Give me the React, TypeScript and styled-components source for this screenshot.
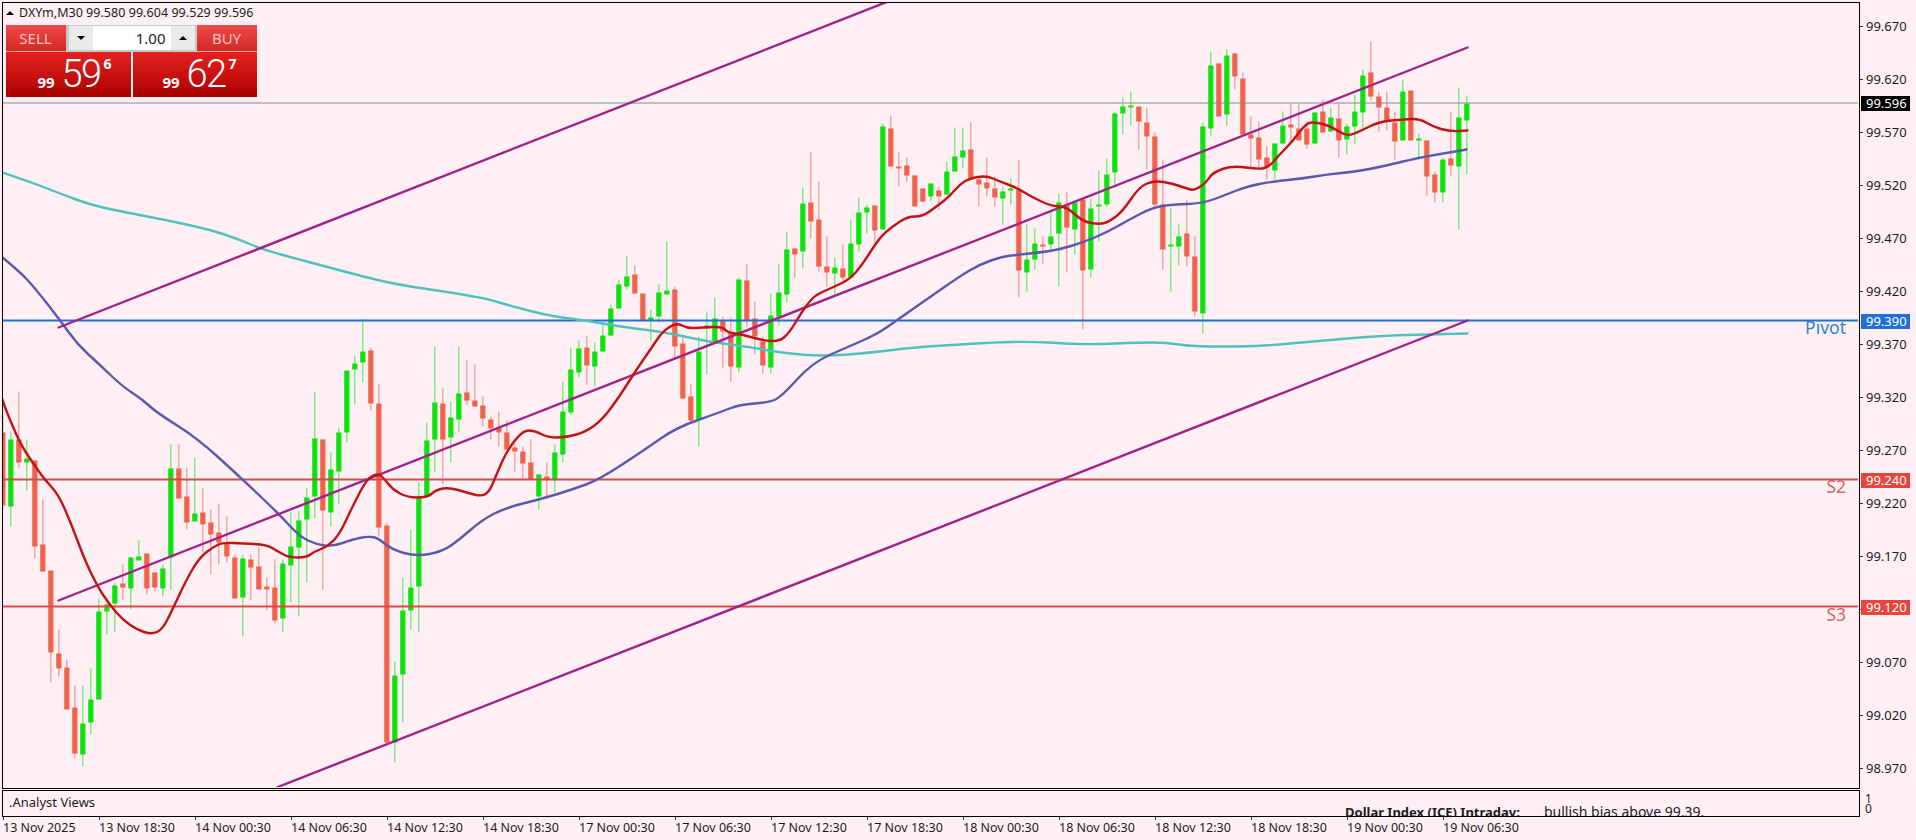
import React from 'react';
import styled, { createGlobalStyle } from 'styled-components';

type Candle = [number, number, number, number, number];

// high, body top, body bottom, low (all in px), 1 = bull
const CANDLES: Candle[] = [
  [405, 433, 506, 510, 0], [432, 440, 507, 527, 1], [392, 440, 463, 468, 0], [440, 459, 463, 491, 1],
  [461, 461, 547, 559, 0], [500, 545, 572, 572, 0], [571, 571, 653, 683, 0], [630, 654, 669, 677, 0],
  [660, 668, 710, 710, 0], [686, 708, 754, 759, 0], [686, 724, 755, 767, 1], [669, 700, 723, 735, 1],
  [599, 612, 700, 700, 1], [600, 605, 612, 635, 1], [583, 586, 604, 632, 1], [565, 584, 588, 600, 0],
  [557, 558, 589, 610, 1], [541, 557, 561, 561, 1], [554, 554, 589, 595, 0], [573, 573, 588, 592, 0],
  [565, 569, 589, 597, 1], [445, 469, 558, 590, 1], [445, 469, 499, 499, 0], [468, 497, 523, 530, 0],
  [458, 514, 522, 522, 1], [488, 513, 525, 553, 0], [510, 523, 535, 575, 0], [504, 533, 543, 565, 0],
  [517, 544, 557, 563, 0], [555, 558, 599, 599, 0], [555, 559, 598, 637, 1], [555, 560, 568, 600, 0],
  [548, 567, 590, 590, 0], [578, 587, 590, 611, 0], [560, 588, 621, 624, 0], [560, 564, 619, 632, 1],
  [513, 547, 566, 603, 1], [511, 521, 548, 617, 1], [489, 498, 520, 583, 1], [393, 439, 497, 519, 1],
  [440, 440, 511, 590, 0], [453, 470, 513, 527, 1], [428, 433, 472, 504, 1], [371, 371, 433, 443, 1],
  [356, 364, 370, 405, 1], [320, 352, 363, 383, 1], [348, 351, 404, 411, 0], [384, 404, 528, 537, 0],
  [523, 526, 743, 743, 0], [662, 676, 743, 763, 1], [578, 611, 675, 723, 1], [530, 588, 611, 630, 1],
  [483, 497, 587, 632, 1], [423, 441, 497, 497, 1], [347, 403, 440, 472, 1], [389, 404, 440, 485, 0],
  [402, 418, 438, 463, 1], [347, 394, 420, 433, 1], [361, 393, 401, 405, 0], [365, 401, 407, 407, 0],
  [397, 406, 419, 427, 0], [417, 420, 429, 440, 0], [412, 428, 433, 447, 0], [421, 433, 450, 452, 0],
  [445, 448, 452, 472, 0], [447, 452, 464, 480, 0], [440, 463, 480, 480, 0], [475, 475, 497, 510, 1],
  [463, 477, 480, 497, 0], [445, 453, 480, 493, 1], [382, 412, 455, 463, 1], [348, 370, 413, 415, 1],
  [341, 349, 373, 378, 1], [337, 348, 366, 385, 0], [343, 352, 367, 387, 1], [323, 336, 352, 352, 1],
  [305, 309, 336, 337, 1], [280, 285, 309, 309, 1], [257, 277, 287, 290, 1], [266, 275, 294, 295, 0],
  [294, 294, 321, 321, 0], [310, 318, 321, 341, 1], [285, 293, 317, 323, 1], [242, 291, 295, 295, 1],
  [287, 290, 347, 358, 0], [338, 344, 399, 400, 0], [385, 397, 421, 423, 0], [337, 352, 420, 447, 1],
  [312, 326, 329, 375, 1], [298, 319, 343, 343, 1], [317, 321, 332, 368, 0], [318, 333, 367, 382, 0],
  [278, 280, 368, 373, 1], [265, 281, 321, 327, 0], [302, 319, 337, 355, 0], [337, 342, 366, 374, 0],
  [294, 316, 368, 374, 1], [265, 293, 317, 326, 1], [232, 250, 295, 303, 1], [249, 249, 255, 278, 0],
  [188, 204, 252, 269, 1], [153, 203, 222, 239, 0], [182, 220, 267, 272, 0], [237, 267, 273, 287, 0],
  [258, 268, 274, 295, 1], [245, 269, 278, 281, 0], [220, 244, 278, 278, 1], [198, 213, 245, 252, 1],
  [205, 208, 213, 234, 1], [206, 206, 231, 243, 0], [124, 127, 230, 230, 1], [116, 129, 167, 167, 0],
  [153, 167, 169, 187, 0], [158, 166, 176, 182, 0], [176, 176, 207, 207, 0], [189, 189, 202, 203, 0],
  [184, 184, 197, 202, 1], [187, 191, 197, 210, 0], [162, 172, 195, 195, 1], [128, 157, 172, 172, 1],
  [128, 151, 158, 169, 1], [123, 150, 180, 180, 0], [178, 180, 185, 207, 0], [158, 183, 189, 197, 0],
  [177, 189, 198, 207, 0], [187, 192, 199, 225, 1], [179, 189, 191, 205, 1], [161, 190, 271, 298, 0],
  [225, 260, 273, 292, 1], [229, 244, 260, 270, 1], [237, 245, 247, 264, 0], [212, 237, 245, 253, 1],
  [194, 203, 234, 287, 1], [193, 205, 228, 273, 0], [202, 203, 230, 255, 1], [198, 200, 271, 330, 0],
  [199, 209, 270, 278, 1], [171, 205, 207, 242, 1], [159, 175, 205, 207, 1], [112, 114, 173, 185, 1],
  [98, 107, 114, 135, 1], [92, 106, 108, 126, 1], [107, 107, 122, 150, 0], [108, 123, 137, 170, 0],
  [133, 137, 205, 207, 0], [160, 205, 250, 270, 0], [209, 245, 247, 292, 1], [224, 237, 247, 266, 1],
  [200, 234, 257, 267, 0], [237, 257, 312, 317, 0], [123, 127, 314, 334, 1], [52, 66, 129, 137, 1],
  [64, 64, 117, 117, 0], [50, 56, 115, 126, 1], [53, 54, 77, 90, 0], [73, 79, 135, 135, 0],
  [117, 135, 139, 167, 0], [122, 138, 160, 168, 0], [147, 158, 168, 180, 0], [144, 144, 171, 180, 1],
  [112, 126, 144, 145, 1], [105, 125, 128, 143, 0], [104, 129, 141, 141, 0], [122, 129, 145, 149, 0],
  [113, 113, 144, 144, 1], [100, 112, 133, 133, 0], [108, 118, 132, 132, 1], [104, 119, 141, 158, 0],
  [124, 127, 140, 155, 1], [95, 112, 127, 144, 1], [70, 76, 113, 129, 1], [42, 73, 97, 101, 0],
  [92, 97, 108, 132, 0], [92, 108, 121, 131, 0], [112, 123, 142, 160, 0], [80, 92, 141, 141, 1],
  [91, 91, 141, 141, 0], [134, 139, 141, 158, 1], [141, 141, 177, 196, 0], [172, 175, 193, 203, 0],
  [158, 160, 193, 203, 1], [113, 159, 166, 177, 0], [88, 118, 167, 230, 1], [96, 104, 121, 175, 1],
];

const FAST_MA =
  '3,400 5,407 20,443 33,463 45,480 59,495 72,525 85,560 98,587 110,605 123,620 137,630 152,635 163,630 173,610 187,580 200,558 213,548 223,543 243,544 267,545 280,553 290,558 307,558 315,552 328,547 340,535 353,507 367,480 377,474 383,477 393,490 408,498 428,498 437,490 450,488 467,493 482,497 490,492 497,475 507,452 523,431 535,431 548,438 567,438 587,432 603,420 620,397 637,370 653,347 663,332 677,323 688,329 703,328 723,327 728,333 743,335 763,341 780,342 790,333 802,313 810,302 817,295 833,288 850,280 863,265 880,238 893,227 908,217 923,217 937,207 950,197 960,185 970,179 987,176 1000,182 1017,188 1033,198 1053,207 1067,207 1083,222 1100,225 1110,222 1123,212 1140,187 1155,181 1173,184 1187,189 1195,191 1207,183 1213,173 1233,166 1260,170 1270,167 1280,155 1293,142 1307,123 1318,123 1332,127 1347,137 1360,132 1380,122 1403,120 1420,119 1433,127 1450,132 1468,131';
const MID_MA =
  '3,258 20,272 35,288 60,320 78,345 100,365 123,387 143,400 157,413 197,438 240,477 280,515 300,537 317,545 333,547 353,540 367,537 378,538 392,550 417,557 443,552 460,540 483,520 507,508 540,500 573,490 600,480 647,449 677,428 720,413 740,405 770,403 782,397 813,363 847,348 877,335 897,321 927,300 960,277 980,265 1003,257 1020,255 1040,253 1060,250 1083,243 1107,233 1130,220 1153,208 1173,205 1203,204 1227,195 1247,187 1273,182 1303,179 1327,175 1357,172 1383,167 1420,158 1450,153 1467,150';
const SLOW_MA =
  '3,173 30,182 63,195 90,205 117,211 143,216 173,222 210,230 240,240 263,250 300,260 367,278 403,286 452,293 480,298 490,300 513,307 553,317 587,321 620,327 667,333 707,342 747,347 780,353 823,357 873,353 913,348 960,345 993,343 1030,342 1067,344 1093,345 1140,343 1167,343 1193,347 1250,347 1280,345 1313,342 1360,338 1390,336 1427,335 1468,334';

const PRICES = ['99.670', '99.620', '99.570', '99.520', '99.470', '99.420', '99.370', '99.320', '99.270', '99.220', '99.170', '99.120', '99.070', '99.020', '98.970'];
const TIMES = ['13 Nov 2025', '13 Nov 18:30', '14 Nov 00:30', '14 Nov 06:30', '14 Nov 12:30', '14 Nov 18:30', '17 Nov 00:30', '17 Nov 06:30', '17 Nov 12:30', '17 Nov 18:30', '18 Nov 00:30', '18 Nov 06:30', '18 Nov 12:30', '18 Nov 18:30', '19 Nov 00:30', '19 Nov 06:30'];

const BG = '#fef0f5';
const BULL = '#0ce30c';
const BEAR = '#f0634a';
const AXIS_FONT = '"Noto Sans", "DejaVu Sans", sans-serif';

// rounds the corners of a moving average through the midpoints of its segments
const smoothPath = (points: string) => {
  const pts = points.split(' ').map((p) => p.split(',').map(Number));
  let d = `M${pts[0][0]} ${pts[0][1]}`;
  for (let i = 1; i < pts.length - 1; i++) {
    const mx = (pts[i][0] + pts[i + 1][0]) / 2;
    const my = (pts[i][1] + pts[i + 1][1]) / 2;
    d += ` Q${pts[i][0]} ${pts[i][1]} ${mx} ${my}`;
  }
  const last = pts[pts.length - 1];
  return `${d} L${last[0]} ${last[1]}`;
};

const GlobalStyle = createGlobalStyle`
  html, body {
    margin: 0;
    padding: 0;
    background: ${BG};
  }
`;

const Page = styled.div`
  width: 1916px;
  height: 840px;
  box-sizing: border-box;
  padding: 2px 0 0 2px;
  overflow: hidden;
  display: grid;
  grid-template-columns: 1858px 56px;
  grid-template-rows: 788px 27px 23px;
  background: ${BG};
  color: #1c1c1c;
  font-family: ${AXIS_FONT};
  font-size: 12.5px;
`;

const Plot = styled.div`
  position: relative;
  height: 787px;
  box-sizing: border-box;
  border: 1.5px solid #000;
  overflow: hidden;
`;

const PlotSvg = styled.svg`
  display: block;
  width: 1855px;
  height: 784px;
`;

const SymbolBar = styled.div`
  position: absolute;
  left: 3px;
  top: 2px;
  display: flex;
  align-items: center;
  white-space: nowrap;
  font-size: 12.5px;
  letter-spacing: 0.05px;
  line-height: 16px;
  gap: 3px;
`;

const SymbolArrow = styled.span`
  width: 0;
  height: 0;
  border-left: 4px solid transparent;
  border-right: 4px solid transparent;
  border-bottom: 4px solid #000;
  margin-right: 2px;
`;

const TradePanel = styled.div`
  position: absolute;
  left: 2.5px;
  top: 21.5px;
  width: 251px;
  height: 72px;
  display: flex;
  gap: 2px;
`;

const SideCard = styled.div<{ $width: number }>`
  width: ${(p) => p.$width}px;
  display: flex;
  flex-direction: column;
`;

const SideTab = styled.div<{ $align: string }>`
  height: 27px;
  display: flex;
  align-items: center;
  justify-content: ${(p) => p.$align};
  background: linear-gradient(#f04a48, #cf2a26);
  border-bottom: 1px solid #f2a09a;
  box-sizing: border-box;
`;

const TabLabel = styled.span`
  width: 60px;
  text-align: center;
  color: #f7c6bd;
  font-size: 15px;
  font-family: "Noto Sans", sans-serif;
`;

const Quote = styled.div<{ $pad: number }>`
  flex: 1;
  display: flex;
  align-items: flex-start;
  padding-left: ${(p) => p.$pad}px;
  color: #fff;
  background: linear-gradient(#e2231f, #c40e0e 60%, #a80000);
`;

const QuoteSmall = styled.span`
  font: bold 15px "Noto Sans", sans-serif;
  margin-top: 20px;
  width: 24px;
`;

const QuoteBig = styled.span`
  font: 300 38px/44px Roboto, sans-serif;
  letter-spacing: -1.6px;
  width: 42px;
`;

const QuotePoint = styled.span`
  font: bold 14px "Noto Sans", sans-serif;
  margin-top: 2px;
`;

const LotControl = styled.div`
  position: absolute;
  left: 60px;
  top: 0;
  width: 131px;
  height: 27px;
  box-sizing: border-box;
  display: flex;
  padding: 1px 2px 2px 3px;
  background: #c9c9c9;
`;

const LotButton = styled.div<{ $up?: boolean }>`
  width: 24px;
  display: flex;
  align-items: center;
  justify-content: center;
  background: #e9eaea;

  &::before {
    content: '';
    border-left: 4px solid transparent;
    border-right: 4px solid transparent;
    ${(p) => (p.$up ? 'border-bottom: 4px solid #000;' : 'border-top: 4px solid #000;')}
  }
`;

const LotValue = styled.div`
  flex: 1;
  background: #fff;
  text-align: right;
  padding-right: 5px;
  font-size: 15px;
  line-height: 24px;
  color: #222;
`;

const LevelLabel = styled.span<{ $y: number; $color: string }>`
  position: absolute;
  right: 13px;
  top: ${(p) => p.$y}px;
  font-size: 17.5px;
  line-height: 18px;
  color: ${(p) => p.$color};
`;

const PriceAxis = styled.div`
  position: relative;
  display: flex;
  flex-direction: column;
  gap: 39px;
  padding-top: 17px;
  font-size: 13px;
`;

const PriceRow = styled.div`
  position: relative;
  height: 14px;
  line-height: 14px;
  padding-left: 6px;

  &::before {
    content: '';
    position: absolute;
    left: 0;
    top: 7px;
    width: 3px;
    height: 1px;
    background: #333;
  }
`;

const PriceBadge = styled.div<{ $y: number; $bg: string }>`
  position: absolute;
  left: 1px;
  top: ${(p) => p.$y}px;
  width: 49px;
  height: 15px;
  line-height: 15px;
  padding-left: 5px;
  box-sizing: border-box;
  color: #fff;
  background: ${(p) => p.$bg};
`;

const SubWindow = styled.div`
  position: relative;
  height: 27px;
  box-sizing: border-box;
  border: 1.5px solid #000;
  overflow: hidden;
  padding-left: 6px;
  line-height: 22px;
  font-size: 13px;
`;

const Headline = styled.div`
  position: absolute;
  left: 1342px;
  top: 12px;
  display: flex;
  align-items: baseline;
  gap: 24px;
  font-size: 14px;
  line-height: 18px;
  white-space: nowrap;
`;

const HeadlineLead = styled.b`
  font-size: 13px;
  font-weight: 700;
`;

const SubScale = styled.div`
  position: relative;
  height: 27px;
  padding-left: 5px;
  line-height: 10px;
  padding-top: 4px;
  box-sizing: border-box;
  font-size: 12px;
`;

const TimeAxis = styled.div`
  grid-column: 1 / 3;
  display: flex;
  padding-left: 1px;
`;

const TimeCell = styled.div`
  position: relative;
  width: 96px;
  flex: none;
  padding-top: 2px;
  line-height: 18px;
  white-space: nowrap;

  &::before {
    content: '';
    position: absolute;
    left: 0;
    top: 0;
    width: 1px;
    height: 3px;
    background: #333;
  }
`;

const Candles = () => (
  <g>
    {CANDLES.map(([high, top, bottom, low, bull], i) => {
      const x = 3.33 + i * 8;
      const color = bull ? BULL : BEAR;
      return (
        <g key={i}>
          <line x1={x} x2={x} y1={high} y2={low} stroke={color} strokeWidth={1} opacity={0.75} />
          <rect x={x - 2.6} y={top} width={5.2} height={Math.max(bottom - top, 2)} fill={color} />
        </g>
      );
    })}
  </g>
);

const App: React.FC = () => (
  <>
    <GlobalStyle />
    <Page>
      <Plot>
        <PlotSvg viewBox="3.5 3.5 1855 784">
          <Candles />
          <line x1="3" x2="1860" y1="103.5" y2="103.5" stroke="#858a8a" strokeWidth="1" />
          <line x1="3" x2="1860" y1="480" y2="480" stroke="#c85050" strokeWidth="2" />
          <line x1="3" x2="1860" y1="607" y2="607" stroke="#e84646" strokeWidth="2" />
          <line x1="3" x2="1860" y1="321" y2="321" stroke="#1e70d8" strokeWidth="2" />
          <g fill="none" strokeLinejoin="round" strokeLinecap="round" strokeWidth="2.4">
            <path d={smoothPath(SLOW_MA)} stroke="#52c0bc" />
            <path d={smoothPath(MID_MA)} stroke="#5c58ae" />
            <line x1="59" y1="328" x2="891" y2="1" stroke="#a0228a" />
            <line x1="59" y1="601" x2="1468" y2="48" stroke="#a0228a" />
            <line x1="277" y1="788" x2="1468" y2="321" stroke="#a0228a" />
            <path d={smoothPath(FAST_MA)} stroke="#c21414" />
          </g>
        </PlotSvg>
        <SymbolBar>
          <SymbolArrow />
          <span>DXYm,M30</span>
          <span>99.580 99.604 99.529 99.596</span>
        </SymbolBar>
        <TradePanel>
          <SideCard $width={125}>
            <SideTab $align="flex-start">
              <TabLabel>SELL</TabLabel>
            </SideTab>
            <Quote $pad={32}>
              <QuoteSmall>99</QuoteSmall>
              <QuoteBig>59</QuoteBig>
              <QuotePoint>6</QuotePoint>
            </Quote>
          </SideCard>
          <SideCard $width={124}>
            <SideTab $align="flex-end">
              <TabLabel>BUY</TabLabel>
            </SideTab>
            <Quote $pad={30}>
              <QuoteSmall>99</QuoteSmall>
              <QuoteBig>62</QuoteBig>
              <QuotePoint>7</QuotePoint>
            </Quote>
          </SideCard>
          <LotControl>
            <LotButton />
            <LotValue>1.00</LotValue>
            <LotButton $up />
          </LotControl>
        </TradePanel>
        <LevelLabel $y={315} $color="#3182d4">Pivot</LevelLabel>
        <LevelLabel $y={474} $color="#e2605c">S2</LevelLabel>
        <LevelLabel $y={602} $color="#e2605c">S3</LevelLabel>
      </Plot>
      <PriceAxis>
        {PRICES.map((price) => (
          <PriceRow key={price}>{price}</PriceRow>
        ))}
        <PriceBadge $y={94} $bg="#000">99.596</PriceBadge>
        <PriceBadge $y={312} $bg="#1e70d8">99.390</PriceBadge>
        <PriceBadge $y={471} $bg="#e8453c">99.240</PriceBadge>
        <PriceBadge $y={598} $bg="#e8453c">99.120</PriceBadge>
      </PriceAxis>
      <SubWindow>
        <span>.Analyst Views</span>
        <Headline>
          <HeadlineLead>Dollar Index (ICE) Intraday:</HeadlineLead>
          <span>bullish bias above 99.39.</span>
        </Headline>
      </SubWindow>
      <SubScale>
        <div>1</div>
        <div>0</div>
      </SubScale>
      <TimeAxis>
        {TIMES.map((time) => (
          <TimeCell key={time}>{time}</TimeCell>
        ))}
      </TimeAxis>
    </Page>
  </>
);

export default App;
